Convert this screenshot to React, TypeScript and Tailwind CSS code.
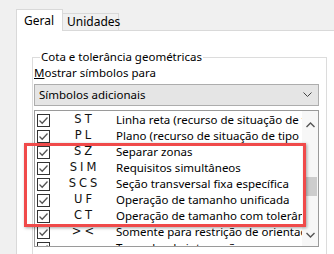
import React from "react";

const rows = [
    { code: "ST", text: "Linha reta (recurso de situação de tipo linha)" },
    { code: "PL", text: "Plano (recurso de situação de tipo plano)" },
    { code: "SZ", text: "Separar zonas" },
    { code: "SIM", text: "Requisitos simultâneos" },
    { code: "SCS", text: "Seção transversal fixa específica" },
    { code: "UF", text: "Operação de tamanho unificada" },
    { code: "CT", text: "Operação de tamanho com tolerância" },
    { code: "><", text: "Somente para restrição de orientação" },
    { code: "", text: "Tamanho de interseção" },
];

function Check() {
    return (
        <div className="w-[13px] h-[13px] border border-[#333] bg-white flex items-center justify-center shrink-0">
            <svg width="11" height="11" viewBox="0 0 11 11">
                <path d="M1.5 5.5 L4.2 8.2 L9.5 2.5" fill="none" stroke="#555" strokeWidth="1.3"/>
            </svg>
        </div>
    );
}

export default function App() {
    return (
        <div className="w-[334px] h-[254px] overflow-hidden bg-[#f0f0f0] text-[11.5px] text-black font-['Noto_Sans',sans-serif] relative">
            {/* tabs */}
            <div className="flex items-end pl-[16px] pt-[9px] h-[31px]">
                <div className="w-[47px] h-[22px] bg-white border border-[#d9d9d9] border-b-0 pl-[7px] pt-[2px] text-[12px] relative z-10">
                    Geral
                </div>
                <div className="w-[56px] h-[18px] bg-[#f0f0f0] border border-[#d9d9d9] border-l-0 pl-[4px] leading-[16px] text-[12px]">
                    Unidades
                </div>
            </div>

            {/* panel */}
            <div className="ml-[16px] -mt-px h-[224px] bg-white border-l border-t border-[#d9d9d9] pl-[15px] pt-[19px]">
                <fieldset className="w-[295px] min-w-0 border border-[#dcdcdc] border-b-0 h-[220px] pl-[1px] pr-[7px]">
                    <legend className="ml-[6px] px-[1px] leading-[14px]">Cota e tolerância geométricas</legend>
                    <div className="leading-[16px] mt-[1px]">
                        <span className="underline">M</span>ostrar símbolos para
                    </div>
                    <div className="mt-[3px] h-[22px] bg-[#e5e5e5] border border-[#adadad] flex items-center justify-between pl-[4px] pr-[6px]">
                        <span>Símbolos adicionais</span>
                        <svg width="9" height="6" viewBox="0 0 9 6">
                            <path d="M0.5 0.5 L4.5 4.5 L8.5 0.5" fill="none" stroke="#444" strokeWidth="1"/>
                        </svg>
                    </div>
                    <div className="mt-[4px] h-[137px] border border-[#9a9a9a] flex overflow-hidden">
                        <div className="flex-1 min-w-0 pt-[1px] overflow-hidden">
                            {rows.map((r) => (
                                <div key={r.text} className="h-[16px] flex items-center pl-[2px] whitespace-nowrap">
                                    <Check/>
                                    <div className="w-[66px] shrink-0 text-center tracking-[3px] font-['DejaVu_Sans',sans-serif] text-[11.5px] text-[#111] pl-[3px]">
                                        {r.code}
                                    </div>
                                    <span>{r.text}</span>
                                </div>
                            ))}
                        </div>
                        <div className="w-[16px] shrink-0 bg-[#f7f7f7] flex flex-col items-center pt-[11px] pb-[8px]">
                            <svg width="9" height="6" viewBox="0 0 9 6">
                                <path d="M0.5 5 L4.5 1 L8.5 5" fill="none" stroke="#555" strokeWidth="1.4"/>
                            </svg>
                            <div className="w-[13px] h-[19px] bg-[#cdcdcd] mt-[49px]"/>
                            <div className="flex-1"/>
                            <svg width="9" height="6" viewBox="0 0 9 6">
                                <path d="M0.5 1 L4.5 5 L8.5 1" fill="none" stroke="#555" strokeWidth="1.4"/>
                            </svg>
                        </div>
                    </div>
                </fieldset>
            </div>

            {/* highlight */}
            <div className="absolute left-[24px] top-[143px] w-[282px] h-[84px] border-[3px] border-[#f04a4a] shadow-[1px_1px_3px_rgba(0,0,0,0.35)]"/>
        </div>
    );
}
